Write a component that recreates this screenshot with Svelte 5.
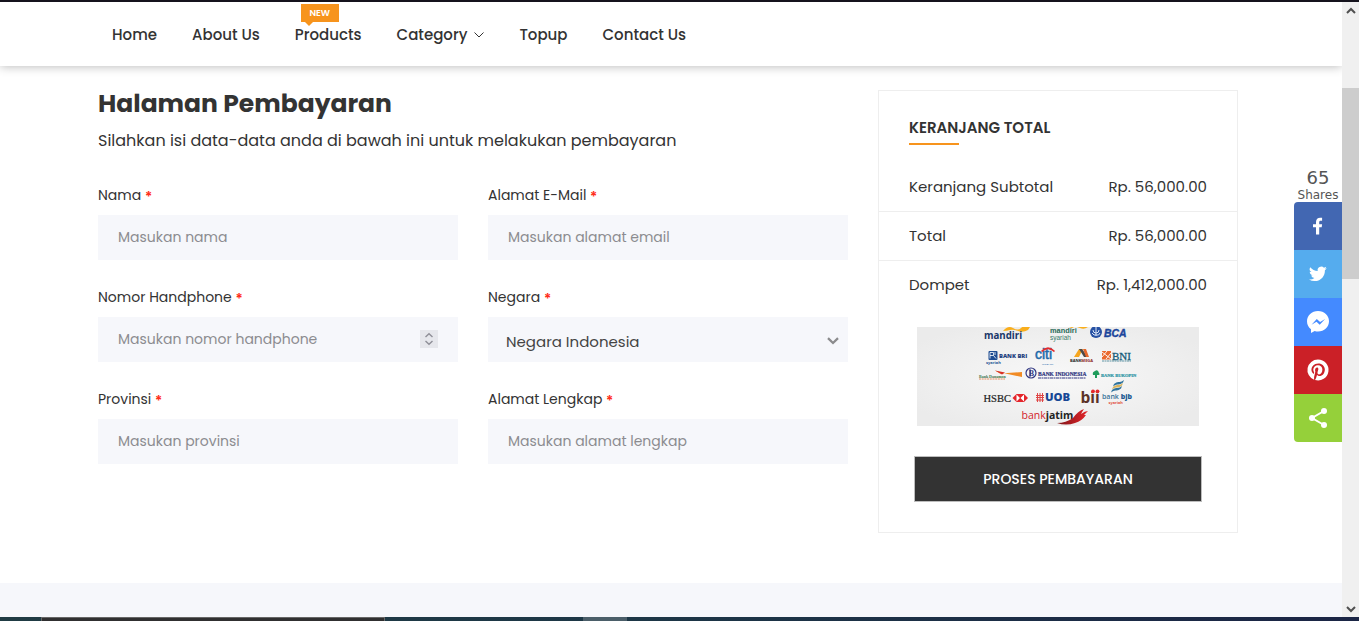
<script>
  const nav = [
    { label: 'Home' },
    { label: 'About Us' },
    { label: 'Products', badge: 'NEW' },
    { label: 'Category', menu: true },
    { label: 'Topup' },
    { label: 'Contact Us' }
  ];
  const fields = [
    { id: 'nama', label: 'Nama', type: 'text', hint: 'Masukan nama' },
    { id: 'email', label: 'Alamat E-Mail', type: 'email', hint: 'Masukan alamat email' },
    { id: 'hp', label: 'Nomor Handphone', type: 'number', hint: 'Masukan nomor handphone' },
    { id: 'negara', label: 'Negara', type: 'select' },
    { id: 'provinsi', label: 'Provinsi', type: 'text', hint: 'Masukan provinsi' },
    { id: 'alamat', label: 'Alamat Lengkap', type: 'text', hint: 'Masukan alamat lengkap' }
  ];
  const totals = [
    ['Keranjang Subtotal', 'Rp. 56,000.00'],
    ['Total', 'Rp. 56,000.00'],
    ['Dompet', 'Rp. 1,412,000.00']
  ];
  const stripes = [0, 1, 2];
</script>

<div class="screen">
  <div class="topline"></div>
  <div class="view">
    <div class="page">
      <header>
        <nav>
          {#each nav as item}
            <a href="#top">
              {item.label}
              {#if item.badge}<span class="badge">{item.badge}</span>{/if}
              {#if item.menu}
                <svg width="10" height="6" viewBox="0 0 10 6"><path d="M.5.5 5 5 9.500.5" fill="none" stroke="#333" /></svg>
              {/if}
            </a>
          {/each}
        </nav>
      </header>

      <main>
        <form onsubmit={(e) => e.preventDefault()}>
          <h1>Halaman Pembayaran</h1>
          <p>Silahkan isi data-data anda di bawah ini untuk melakukan pembayaran</p>
          <div class="fields">
            {#each fields as f}
              <div class="field">
                <label for={f.id}>{f.label} <span class="star">*</span></label>
                <div class="control">
                  {#if f.type === 'select'}
                    <select id={f.id}><option>Negara Indonesia</option></select>
                    <svg class="caret" width="12" height="8" viewBox="0 0 12 8"><path d="M1 1.200 6 6 11 1.200" fill="none" stroke="#8b8b8d" stroke-width="2.300" /></svg>
                  {:else}
                    <input id={f.id} type={f.type} placeholder={f.hint} />
                    {#if f.type === 'number'}
                      <svg class="spin" width="18" height="18" viewBox="0 0 18 18"><rect width="18" height="18" fill="#e6e7ec" /><path d="M5.500 7 9 3.700 12.500 7M5.500 11 9 14.300 12.500 11" fill="none" stroke="#8f8f98" stroke-width="1.400" /></svg>
                    {/if}
                  {/if}
                </div>
              </div>
            {/each}
          </div>
        </form>

        <aside>
          <h2>KERANJANG TOTAL</h2>
          <ul>
            {#each totals as [name, amount]}
              <li><span>{name}</span><span>{amount}</span></li>
            {/each}
          </ul>
          <svg class="banks" viewBox="0 0 282 99" role="img" aria-label="Bank">
            <defs>
              <radialGradient id="paper" cx="50%" cy="50%" r="60%">
                <stop offset="0" stop-color="#f8f8f8" /><stop offset="1" stop-color="#ebebeb" />
              </radialGradient>
              <linearGradient id="wing"><stop offset="0" stop-color="#7d1418" /><stop offset="1" stop-color="#e5252a" /></linearGradient>
            </defs>
            <rect width="282" height="99" fill="url(#paper)" />

            <path d="M86 4Q91-2 96 1T104 1 113 0L111 3Q106 6 101 4T93 3 86 4Z" fill="#f9ae1c" />
            <text x="67" y="11.500" font-size="9.700" font-weight="700" fill="#1a3668">mandiri</text>
            <path d="M152 0h5l-2 1zM160 0h11q-4 3-8 1z" fill="#f9ae1c" />
            <text class="sans" x="133" y="6.300" font-size="7.400" font-weight="700" fill="#2a6b59">mandiri</text>
            <text class="sans" x="133" y="12.900" font-size="6.500" fill="#397c69">syariah</text>
            <circle cx="179" cy="5" r="6" fill="#2751a3" />
            <path d="M179 0v9M176 3q0 3 3 3t3-3M175 6q2 3 4 2 3 1 4-2" fill="none" stroke="#d9e4f6" />
            <text class="sans" x="187" y="9.900" font-size="10.400" font-style="italic" font-weight="700" fill="#1b459b" stroke="#1b459b" stroke-width=".4">BCA</text>

            <rect x="71.500" y="24" width="9" height="9" rx="1" fill="#1f4c92" />
            <path d="M73 31.500v-6h3.500v3H73m3.500 0L79 31.500M78 25v3" fill="none" stroke="#fff" stroke-width=".8" />
            <text x="82" y="30.500" font-size="5.800" font-weight="800" fill="#1f4280">BANK BRI</text>
            <text x="69" y="36.500" font-size="4" font-weight="700" fill="#275694">syariah</text>
            <text class="sans" x="118" y="32" font-size="14" font-weight="400" fill="#2168a9" stroke="#2168a9" stroke-width=".5">citi</text>
            <path d="M124.500 24.500Q131 18 137.500 24.500" fill="none" stroke="#e22b2e" stroke-width="1.700" />
            <text class="sans" x="125" y="38" font-size="2.500" fill="#2168a9">CITIBANK</text>
            <path d="M157 30l5-8h4l-4 8z" fill="#f6a61f" /><path d="M162 22h3l6 8h-4z" fill="#4d4a48" /><path d="M166 22h3l3 8h-3z" fill="#e6672b" />
            <text x="153" y="34.500" font-size="4" font-weight="700" fill="#222">BANK<tspan fill="#8d2422">MEGA</tspan></text>
            <rect x="185" y="24" width="9" height="8.500" fill="#e9682e" />
            <path d="M185 25l9 7M190 24l-5 6M194 26l-5 6" stroke="#fff" stroke-width=".9" />
            <text class="serif" x="195" y="32.700" font-size="11" fill="#155b78" stroke="#155b78" stroke-width=".3">BNI</text>
            <path d="M185 34h29" stroke="#3d7f92" stroke-width=".8" stroke-dasharray="2 .5" />

            <path d="M78 43.500l5 3 22-1.500v5L86 46z" fill="#f18b25" /><path d="M78 43.500l10 2-3 2z" fill="#d93025" />
            <text class="serif" x="62" y="50.500" font-size="4" font-weight="700" fill="#40784d">Bank Danamon</text>
            <path d="M62 52h26" stroke="#e3763e" stroke-width=".8" stroke-dasharray="2 .7" />
            <circle cx="114" cy="46" r="5" fill="none" stroke="#303681" stroke-width="1.200" />
            <text class="serif" x="111.700" y="49" font-size="8" font-weight="700" fill="#303681">B</text>
            <path d="M113 42v8" stroke="#303681" />
            <text class="serif" x="121" y="48.700" font-size="5.500" font-weight="700" fill="#303681" stroke="#303681" stroke-width=".2">BANK INDONESIA</text>
            <path d="M121 51h48" stroke="#303681" stroke-width="1" stroke-dasharray="3 .5 2 .5" />
            <path d="M176 48q-1-3 2-4 3-2 4 2 2 2-2 2v3h-2v-3z" fill="#1f9c5b" />
            <text class="serif" x="184" y="50" font-size="4.500" font-weight="700" fill="#2b94a4" stroke="#2b94a4" stroke-width=".2">BANK BUKOPIN</text>

            <text class="serif" x="66.500" y="75" font-size="10.500" fill="#222" stroke="#222" stroke-width=".2">HSBC</text>
            <path d="M95.500 71l4-4h7.500l4 4-4 4h-7.500z" fill="#e4252b" /><path d="M99.500 67.500l3.500 3.500-3.500 3.500zM107 67.500l-3.500 3.500 3.500 3.500z" fill="#fff" />
            <path d="M120.500 66v9M123 66v9M125.500 66v9M119 68.500h8M119 70.500h8M119 73h8" stroke="#df4545" stroke-width="1" />
            <text x="128" y="74.300" font-size="11.300" font-weight="800" fill="#174795">UOB</text>
            <text x="163.500" y="75.500" font-size="15.500" font-weight="700" fill="#5c3328">bii</text>
            <circle cx="176" cy="64.300" r="1.900" fill="#e6272b" /><circle cx="180.500" cy="64.300" r="1.900" fill="#e6272b" />
            {#each stripes as n}
              <path d="M{197 - n} {57 + n * 3}q3-2.500 5-2t5-2l-1 2.500q-3 2.500-5 2t-5 2z" fill={n === 1 ? '#d9b45c' : '#2f739e'} />
            {/each}
            <text x="185" y="72" font-size="7" font-weight="600" fill="#397299">bank <tspan font-weight="800" fill="#225b92">bjb</tspan></text>
            <text x="191.500" y="76.700" font-size="3.900" font-weight="700" fill="#e2543d">syariah</text>

            <text x="104.500" y="92" font-size="10.500" font-weight="500" fill="#d3232a">bank<tspan font-weight="700" fill="#222">jatim</tspan></text>
            <path d="M140 96q9 0 16-5 5-7 11-9-2 3-3 5 4-3 7-3-2 2-4 4h2q-4 6-11 8-9 3-18 0z" fill="url(#wing)" />
          </svg>
          <button class="pay" type="button">PROSES PEMBAYARAN</button>
        </aside>
      </main>
      <footer></footer>

      <div class="share">
        <strong>65</strong>
        <span>Shares</span>
        <a class="fb" href="#fb" aria-label="Facebook"><svg viewBox="0 0 48 48"><path d="M22 32.500v-7.300h-3v-3h3v-2.200c0-2.900 1.700-4.300 4.200-4.300l1.900.1v2.900h-1.300c-1.300 0-1.600.7-1.600 1.600v1.900h2.900l-.4 3h-2.500v7.300z" fill="#fff" /></svg></a>
        <a class="tw" href="#tw" aria-label="Twitter"><svg viewBox="0 0 48 48"><path transform="translate(15 16.500) scale(.74)" d="M24 2.400a10 10 0 0 1-2.800.8A5 5 0 0 0 23.300.5a10 10 0 0 1-3.100 1.200A4.900 4.900 0 0 0 11.800 6.200 14 14 0 0 1 1.700 1a4.900 4.900 0 0 0 1.500 6.600A5 5 0 0 1 1 7v.1a5 5 0 0 0 3.900 4.800 5 5 0 0 1-2.200.1 4.900 4.900 0 0 0 4.600 3.400A10 10 0 0 1 0 17.500a14 14 0 0 0 7.500 2.200c9.300 0 14.200-7.800 14-14.800A10 10 0 0 0 24 2.400z" fill="#fff" /></svg></a>
        <a class="ms" href="#ms" aria-label="Messenger"><svg viewBox="0 0 48 48"><path d="M24 13c-6.200 0-11 4.300-11 10.300 0 3.500 1.500 6 4 8V35l3.700-2c1 .4 2.100.5 3.300.5 6.300 0 11-4.500 11-10.300S30.300 13 24 13z" fill="#fff" /><path d="M17.500 26.800l5.300-5.800 3.300 3.100 5-3.100-5.400 5.800-3.200-3.100z" fill="#448aff" /></svg></a>
        <a class="pi" href="#pi" aria-label="Pinterest"><svg viewBox="0 0 48 48"><path transform="translate(13.500 13.500) scale(.875)" d="M12 0a12 12 0 0 0-4.400 23.200c-.1-1-.2-2.400 0-3.400l1.400-6s-.3-.7-.3-1.800c0-1.700 1-2.900 2.200-2.900 1 0 1.500.8 1.500 1.700 0 1-.7 2.600-1 4-.3 1.200.6 2.200 1.800 2.200 2.100 0 3.800-2.200 3.800-5.500 0-2.900-2.100-4.900-5-4.900a5.200 5.200 0 0 0-5.400 5.200c0 1 .4 2.100.9 2.700.1.100.1.200.1.300l-.3 1.400c-.1.200-.2.300-.4.200-1.500-.7-2.400-2.900-2.400-4.600 0-3.800 2.800-7.300 7.900-7.300 4.200 0 7.400 3 7.400 6.900 0 4.100-2.600 7.500-6.200 7.500-1.200 0-2.400-.6-2.700-1.400l-.8 2.900c-.3 1-1 2.300-1.500 3.100A12 12 0 1 0 12 0z" fill="#fff" /></svg></a>
        <a class="sh" href="#sh" aria-label="Share"><svg viewBox="0 0 48 48"><path d="M30 17 18 24l12 7" fill="none" stroke="#fff" stroke-width="2" /><g fill="#fff"><circle cx="30" cy="17" r="3" /><circle cx="18" cy="24" r="3" /><circle cx="30" cy="31" r="3" /></g></svg></a>
      </div>
    </div>

    <div class="scrollbar">
      <svg width="10" height="7" viewBox="0 0 10 7"><path d="M1 6 5 2 9 6" fill="none" stroke="#505050" stroke-width="2" /></svg>
      <div class="track"><div class="thumb"></div></div>
      <svg width="10" height="7" viewBox="0 0 10 7"><path d="M1 1 5 5 9 1" fill="none" stroke="#505050" stroke-width="2" /></svg>
    </div>
  </div>
  <div class="taskbar"><i class="task"></i><i class="active"></i></div>
</div>

<style>
  :global(body) { background: #fff; color: #333; font-family: Poppins, Inter, sans-serif; }
  * { box-sizing: border-box; }
  .screen { display: flex; flex-direction: column; min-height: 100vh; }
  .topline { height: 2px; background: #15131d; }
  .view { display: flex; flex: 1; }
  .page { position: relative; display: flex; flex: 1; flex-direction: column; min-width: 0; }
  header { padding: 0 112px; background: #fff; box-shadow: 0 0 10px rgba(0, 0, 0, 0.3); clip-path: inset(0 0 -16px 0); }
  nav { display: flex; gap: 35px; height: 64px; padding-top: 2px; align-items: center; }
  nav a { position: relative; display: flex; align-items: center; gap: 7px; color: #333; font-size: 15px; font-weight: 500; line-height: 24px; text-decoration: none; white-space: nowrap; }
  .badge { position: absolute; left: 6px; bottom: 25px; width: 38px; height: 18px; background: #f7941d; color: #fff; font-size: 9px; font-weight: 600; line-height: 18px; text-align: center; }
  .badge::after { position: absolute; left: 4px; top: 18px; border: 4px solid transparent; border-top-color: #f7941d; border-bottom: 0; content: ''; }
  main { display: grid; grid-template-columns: 25fr 12fr; gap: 30px; padding: 24px 104px 50px 98px; }
  h1 { margin: 0; font-size: 25px; font-weight: 700; line-height: 28px; }
  p { margin: 11px 0 30px; font-size: 16px; line-height: 24px; }
  .fields { display: grid; grid-template-columns: 1fr 1fr; gap: 25px 30px; }
  .field { display: flex; flex-direction: column; gap: 8px; }
  label { font-size: 14px; line-height: 24px; height: 24px; }
  .star { color: #ff2c18; font-weight: 600; line-height: 16px; vertical-align: -2px; }
  .control { position: relative; height: 45px; }
  input, select { width: 100%; height: 45px; padding: 0 20px; border: 0; border-radius: 0; outline: 0; background: #f6f7fb; color: #333; font: 14px Poppins, Inter, sans-serif; appearance: none; }
  input[type='number'] { appearance: textfield; }
  input::placeholder { color: #8c8c90; opacity: 1; }
  select { padding: 4px 18px 0; color: #444; font-size: 15px; }
  .caret { position: absolute; right: 9px; top: 20px; }
  .spin { position: absolute; right: 20px; top: 13px; }
  aside { padding: 25px 0 30px; border: 1px solid #eee; }
  h2 { margin: 0 30px; padding-bottom: 5px; font-size: 15px; font-weight: 600; line-height: 24px; }
  h2::after { display: block; width: 50px; height: 2px; margin-top: 3px; background: #f7941d; content: ''; }
  ul { margin: 13px 0 18px; padding: 0; list-style: none; }
  li { display: flex; justify-content: space-between; padding: 12px 30px; font-size: 15px; line-height: 24px; }
  li + li { border-top: 1px solid #eee; }
  .banks { display: block; width: calc(100% - 76px); margin: 0 38px 30px; font-family: 'Open Sans', sans-serif; }
  .serif { font-family: 'Liberation Serif', serif; }
  .sans { font-family: 'Liberation Sans', sans-serif; }
  .pay { display: block; width: calc(100% - 70px); height: 46px; margin: 0 35px; border: 1px solid #bdbdbd; background: #333; color: #fff; font: 500 14px Poppins, Inter, sans-serif; }
  footer { flex: 1; min-height: 34px; background: #f6f7fb; }
  .share { position: absolute; top: 166px; right: 0; display: flex; width: 48px; flex-direction: column; color: #555; font-family: 'DejaVu Sans', Verdana, sans-serif; text-align: center; }
  .share strong { font-size: 18px; font-weight: 400; line-height: 20px; }
  .share span { font-size: 12px; line-height: 14px; }
  .share a { width: 48px; height: 48px; }
  .share svg { display: block; }
  .fb { border-radius: 4px 0 0; background: #4267b2; }
  .tw { background: #55acee; }
  .ms { background: #448aff; }
  .pi { background: #cb2027; }
  .sh { border-radius: 0 0 0 4px; background: #95d03a; }
  .scrollbar { display: flex; width: 17px; flex-direction: column; align-items: center; padding: 5px 0 4px; background: #f0f0f0; }
  .track { flex: 1; width: 100%; padding-top: 74px; }
  .thumb { height: 191px; background: #cdcdcd; }
  .taskbar { display: flex; height: 4px; background: linear-gradient(90deg, #203b43, #1d3746 45%, #1b2545); }
  .task { width: 344px; margin-left: 41px; border: 1px solid #666; border-bottom: 0; background: #302f30; }
  .active { width: 44px; margin-left: 198px; background: #4b5e69; }
</style>
